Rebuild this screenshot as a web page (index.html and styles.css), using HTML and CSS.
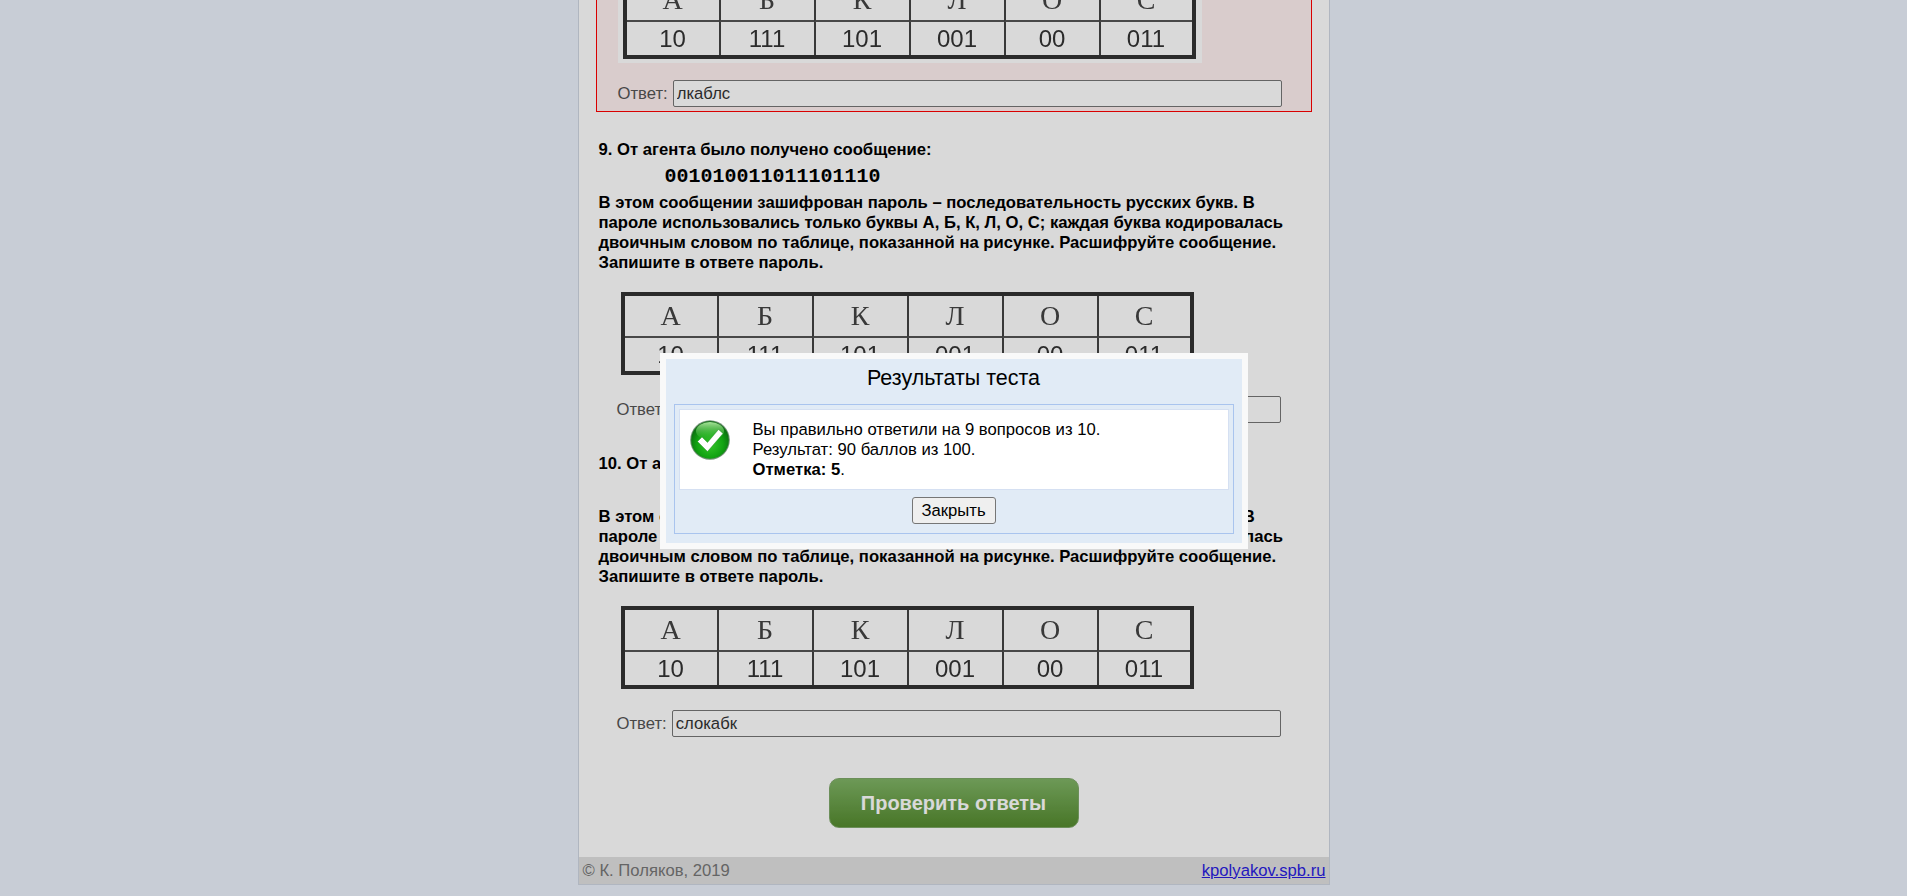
FILE: index.html
```html
<!DOCTYPE html>
<html lang="ru">

<head>
    <meta charset="UTF-8">
    <title>Тест: кодирование</title>
    <link rel="stylesheet" href="styles.css">
</head>

<body>

    <div class="page">

        <div class="task task--wrong">
            <div class="pic">
                <table class="codes">
                    <tr><th>А</th><th>Б</th><th>К</th><th>Л</th><th>О</th><th>С</th></tr>
                    <tr><td>10</td><td>111</td><td>101</td><td>001</td><td>00</td><td>011</td></tr>
                </table>
            </div>
            <div class="answer">
                <label class="answer__label">Ответ:</label>
                <input class="answer__input" type="text" value="лкаблс">
            </div>
        </div>

        <div class="task">
            <p class="task__text">9. От агента было получено сообщение:</p>
            <p class="task__code">001010011011101110</p>
            <p class="task__text">В этом сообщении зашифрован пароль – последовательность русских букв. В пароле использовались только буквы А, Б, К, Л, О, С; каждая буква кодировалась двоичным словом по таблице, показанной на рисунке. Расшифруйте сообщение. Запишите в ответе пароль.</p>
            <div class="pic">
                <table class="codes">
                    <tr><th>А</th><th>Б</th><th>К</th><th>Л</th><th>О</th><th>С</th></tr>
                    <tr><td>10</td><td>111</td><td>101</td><td>001</td><td>00</td><td>011</td></tr>
                </table>
            </div>
            <div class="answer">
                <label class="answer__label">Ответ:</label>
                <input class="answer__input" type="text" value="оклабса">
            </div>
        </div>

        <div class="task">
            <p class="task__text">10. От агента было получено сообщение:</p>
            <p class="task__code">0110010010110111101</p>
            <p class="task__text">В этом сообщении зашифрован пароль – последовательность русских букв. В пароле использовались только буквы А, Б, К, Л, О, С; каждая буква кодировалась двоичным словом по таблице, показанной на рисунке. Расшифруйте сообщение. Запишите в ответе пароль.</p>
            <div class="pic">
                <table class="codes">
                    <tr><th>А</th><th>Б</th><th>К</th><th>Л</th><th>О</th><th>С</th></tr>
                    <tr><td>10</td><td>111</td><td>101</td><td>001</td><td>00</td><td>011</td></tr>
                </table>
            </div>
            <div class="answer">
                <label class="answer__label">Ответ:</label>
                <input class="answer__input" type="text" value="слокабк">
            </div>
        </div>

        <div class="submit">
            <button class="submit__btn" type="button">Проверить ответы</button>
        </div>

        <div class="footer">
            <span>© К. Поляков, 2019</span>
            <a class="footer__link" href="#">kpolyakov.spb.ru</a>
        </div>
    </div>

    <!-- затемнение и окно с результатом -->
    <div class="shade"></div>
    <div class="popup">
        <div class="popup__title">Результаты теста</div>
        <div class="popup__body">
            <div class="result">
                <svg class="result__icon" width="40" height="40" viewBox="0 0 40 40">
                    <defs>
                        <radialGradient id="ball" cx="50%" cy="62%" r="58%">
                            <stop offset="0" stop-color="#35c52a"/>
                            <stop offset=".6" stop-color="#12a312"/>
                            <stop offset="1" stop-color="#0a6a10"/>
                        </radialGradient>
                        <linearGradient id="shine" x1="0" y1="0" x2="0" y2="1">
                            <stop offset="0" stop-color="#a8e49a"/>
                            <stop offset="1" stop-color="#2fb52a" stop-opacity=".2"/>
                        </linearGradient>
                    </defs>
                    <circle cx="20" cy="20" r="19.8" fill="#6f8f72"/>
                    <circle cx="20" cy="20" r="18.8" fill="url(#ball)"/>
                    <ellipse cx="20" cy="11" rx="14" ry="9" fill="url(#shine)"/>
                    <path d="M7.5 21.5l4.5-4.5 5.5 5.5L28.5 9.5l4.5 4-15.5 18z" fill="#fff" stroke="#0c7a12" stroke-opacity=".45" stroke-width=".8"/>
                </svg>
                <div class="result__text">
                    Вы правильно ответили на 9 вопросов из 10.<br>
                    Результат: 90 баллов из 100.<br>
                    <b>Отметка: 5</b>.
                </div>
            </div>
            <div class="popup__actions">
                <button class="popup__close" type="button">Закрыть</button>
            </div>
        </div>
    </div>

</body>

</html>
```

FILE: styles.css
```css
html, body {
    margin: 0;
    height: 896px;
    overflow: hidden;
}

body {
    background: #ebf1fc;
    font-family: "Liberation Sans", Arial, sans-serif;
    font-size: 16.67px;
    line-height: 20px;
    color: #000;
}

.page {
    box-sizing: border-box;
    width: 752px;
    margin: -28px auto 0;
    background: #fff;
    border: 1px solid #cfd6e2;
    border-width: 0 1px 1px;
}

.task {
    padding: 0 20px 31px;
}

.task--wrong {
    margin: 0 17px 28px;
    padding: 0 20px 4px 21px;
    background: #fff0f0;
    border: 1px solid #f00;
    border-top: 0;
}

.task__text {
    margin: 0;
    font-weight: bold;
}

.task__code {
    margin: 4px 0 3px 66px;
    font-family: "Liberation Mono", "Courier New", monospace;
    font-size: 20px;
    font-weight: bold;
    line-height: 26px;
}

.pic {
    display: inline-block;
    vertical-align: top;
    margin: 15px 0 0 17px;
    padding: 4px 6px 4px 5px;
    background: #fff;
}

.task--wrong .pic {
    margin: 0;
}

/* таблица кодов, в оригинале картинка */
.codes {
    box-sizing: border-box;
    width: 573px;
    height: 83px;
    table-layout: fixed;
    border-collapse: separate;
    border-spacing: 0;
    border: 4px solid #333;
    color: #444;
    filter: blur(.4px);
}

.codes th,
.codes td {
    width: 93px;
    padding: 0;
    text-align: center;
    border-left: 2px solid #444;
}

.codes th:first-child,
.codes td:first-child {
    width: 92px;
    border-left: 0;
}

.codes th:last-child,
.codes td:last-child {
    width: auto;
}

.codes th {
    height: 40px;
    border-bottom: 2px solid #555;
    font-family: "Liberation Serif", serif;
    font-size: 28px;
    font-weight: normal;
}

.codes td {
    font-size: 24px;
    color: #333;
}

.answer {
    display: flex;
    align-items: center;
    margin: 17px 0 0 18px;
    width: 664px;
    color: #555;
}

.task--wrong .answer {
    margin-left: 0;
}

.answer__label {
    margin-right: 5px;
}

.answer__input {
    flex: 1;
    box-sizing: border-box;
    height: 27px;
    padding: 1px 3px;
    border: 1px solid #767676;
    border-radius: 2px;
    background: #fff;
    font-family: inherit;
    font-size: 16.67px;
    color: #333;
}

.submit {
    text-align: center;
    padding: 10px 0 29px;
}

.submit__btn {
    width: 250px;
    height: 50px;
    border: 1px solid #7fa86a;
    border-radius: 10px;
    background: linear-gradient(#80b466, #558b2f);
    font-family: inherit;
    font-size: 20px;
    font-weight: bold;
    color: #fff;
}

.footer {
    display: flex;
    justify-content: space-between;
    height: 27px;
    padding: 0 3px 0 4px;
    background: #e1e1e1;
    line-height: 27px;
    color: #777;
}

.footer__link {
    color: #2a1ce0;
}

.shade {
    position: fixed;
    top: 0;
    left: 0;
    right: 0;
    bottom: 0;
    background: rgba(0, 0, 0, .15);
}

.popup {
    position: fixed;
    top: 353px;
    left: 50%;
    box-sizing: border-box;
    width: 588px;
    height: 196px;
    margin-left: -294px;
    padding: 0 8px;
    background: #e1ebf6;
    border: 6px solid #f9f9f9;
}

.popup__title {
    height: 45px;
    text-align: center;
    font-size: 21.5px;
    line-height: 38px;
}

.popup__body {
    height: 130px;
    box-sizing: border-box;
    padding: 4px;
    border: 1px solid #a9c4ee;
}

.result {
    display: flex;
    box-sizing: border-box;
    height: 81px;
    background: #fff;
    border: 1px solid #d5e0f2;
}

.result__icon {
    margin: 10px 23px 0 10px;
}

.result__text {
    padding-top: 10px;
}

.popup__actions {
    margin-top: 7px;
    text-align: center;
}

.popup__close {
    box-sizing: border-box;
    width: 84px;
    height: 27px;
    padding: 0;
    border: 1px solid #767676;
    border-radius: 3px;
    background: #efefef;
    font-family: inherit;
    font-size: 16.67px;
    color: #000;
}
```
